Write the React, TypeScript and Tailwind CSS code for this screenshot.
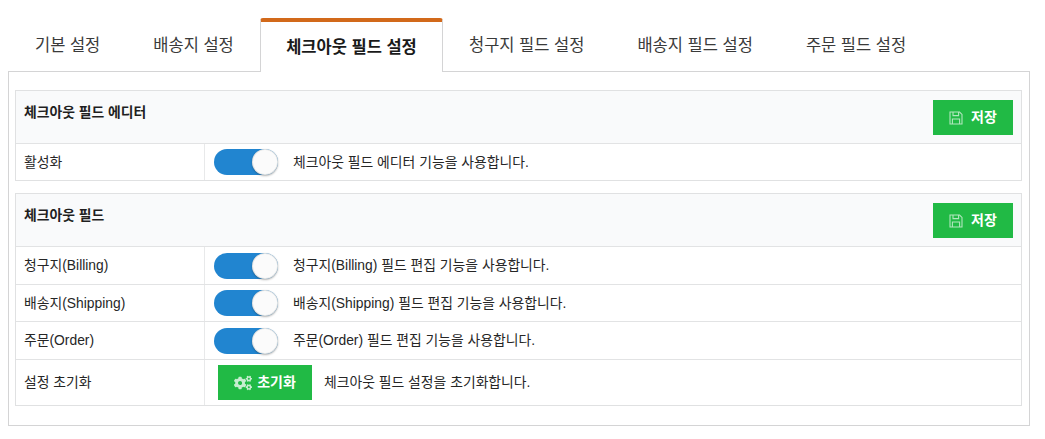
import React from "react";
import { FaCogs } from "react-icons/fa";

const tabs = ["기본 설정", "배송지 설정", "체크아웃 필드 설정", "청구지 필드 설정", "배송지 필드 설정", "주문 필드 설정"];

const Toggle = () => (
  <div className="flex h-[26px] w-[64px] shrink-0 justify-end rounded-full bg-[#2185d0]">
    <div className="h-[26px] w-[26px] rounded-full bg-[#fbfbfb] shadow-[0_1px_2px_rgba(34,36,38,0.35),inset_0_0_0_1px_rgba(34,36,38,0.1)]" />
  </div>
);

const GreenButton = ({ label, icon, className }: { label: string; icon: React.ReactNode; className: string }) => (
  <button className={`flex h-[35px] shrink-0 items-center justify-center bg-[#21ba45] text-[14px] font-bold text-white ${className}`}>
    {icon}
    {label}
  </button>
);

// floppy outline, the icon packages' versions have a round hub instead of a label
const SaveIcon = () => (
  <svg viewBox="0 0 14 14" className="mr-[8px] h-[14px] w-[14px] opacity-65" fill="none" stroke="currentColor" strokeWidth="1.1">
    <path d="M1 1h9.6L13 3.4V13H1z" />
    <path d="M4 1v3.6h5.6V1" />
    <path d="M3.4 13V8h7.2v5" />
  </svg>
);

const SaveButton = () => <GreenButton label="저장" className="w-[80px]" icon={<SaveIcon />} />;

const Header = ({ title }: { title: string }) => (
  <div className="flex h-[53px] justify-between border-b border-[#e2e3e4] bg-[#f9fafb] px-[8px] pt-[9px]">
    <div className="pt-[3px] text-[13.85px] leading-[18px] font-bold text-[#1f1f1f]">{title}</div>
    <SaveButton />
  </div>
);

const Row = ({ label, text, height }: { label: string; text: string; height: string }) => (
  <div className={`flex items-center border-b border-[#e2e3e4] last:border-b-0 ${height}`}>
    <div className="flex h-full w-[189px] items-center border-r border-[#e8e9ea] pl-[8px]">{label}</div>
    <div className="flex items-center gap-[15px] pl-[9px]">
      <Toggle />
      <span>{text}</span>
    </div>
  </div>
);

export default function App() {
  return (
    <div className="h-[439px] w-[1045px] bg-white pt-[18px] pl-[8px] font-['Liberation_Sans','Noto_Sans_CJK_KR',sans-serif] text-[13.85px] text-[#262626]">
      <div className="relative z-10 -mb-px flex h-[54px] items-stretch text-[16.5px] text-[#3a3a3a]">
        <div className="flex w-[252px] items-center pl-[27px]">
          <span className="mr-[53px]">{tabs[0]}</span>
          <span>{tabs[1]}</span>
        </div>
        <div className="flex w-[183px] items-center justify-center rounded-t-[3px] border-x border-[#d4d4d5] border-t-[4px] border-t-[#d2691a] bg-white font-bold text-[#1a1a1a]">
          {tabs[2]}
        </div>
        <div className="flex w-[500px] items-center gap-[53px] pl-[26px]">
          <span>{tabs[3]}</span>
          <span>{tabs[4]}</span>
          <span>{tabs[5]}</span>
        </div>
      </div>
      <div className="h-[355px] w-[1022px] border border-[#d4d4d5] pt-[18px] pr-[7px] pl-[6px]">
        <div className="border border-[#e0e1e2]">
          <Header title="체크아웃 필드 에디터" />
          <Row label="활성화" text="체크아웃 필드 에디터 기능을 사용합니다." height="h-[36px]" />
        </div>
        <div className="mt-[12px] border border-[#e0e1e2]">
          <Header title="체크아웃 필드" />
          <Row label="청구지(Billing)" text="청구지(Billing) 필드 편집 기능을 사용합니다." height="h-[38px]" />
          <Row label="배송지(Shipping)" text="배송지(Shipping) 필드 편집 기능을 사용합니다." height="h-[37px]" />
          <Row label="주문(Order)" text="주문(Order) 필드 편집 기능을 사용합니다." height="h-[38px]" />
          <div className="flex h-[45px] items-center">
            <div className="flex h-full w-[189px] items-center border-r border-[#e8e9ea] pl-[8px]">설정 초기화</div>
            <div className="flex items-center gap-[12px] pl-[13px]">
              <GreenButton
                label="초기화"
                className="w-[94px]"
                icon={<FaCogs className="mr-[5px] text-[18px] opacity-75" />}
              />
              <span>체크아웃 필드 설정을 초기화합니다.</span>
            </div>
          </div>
        </div>
      </div>
    </div>
  );
}
